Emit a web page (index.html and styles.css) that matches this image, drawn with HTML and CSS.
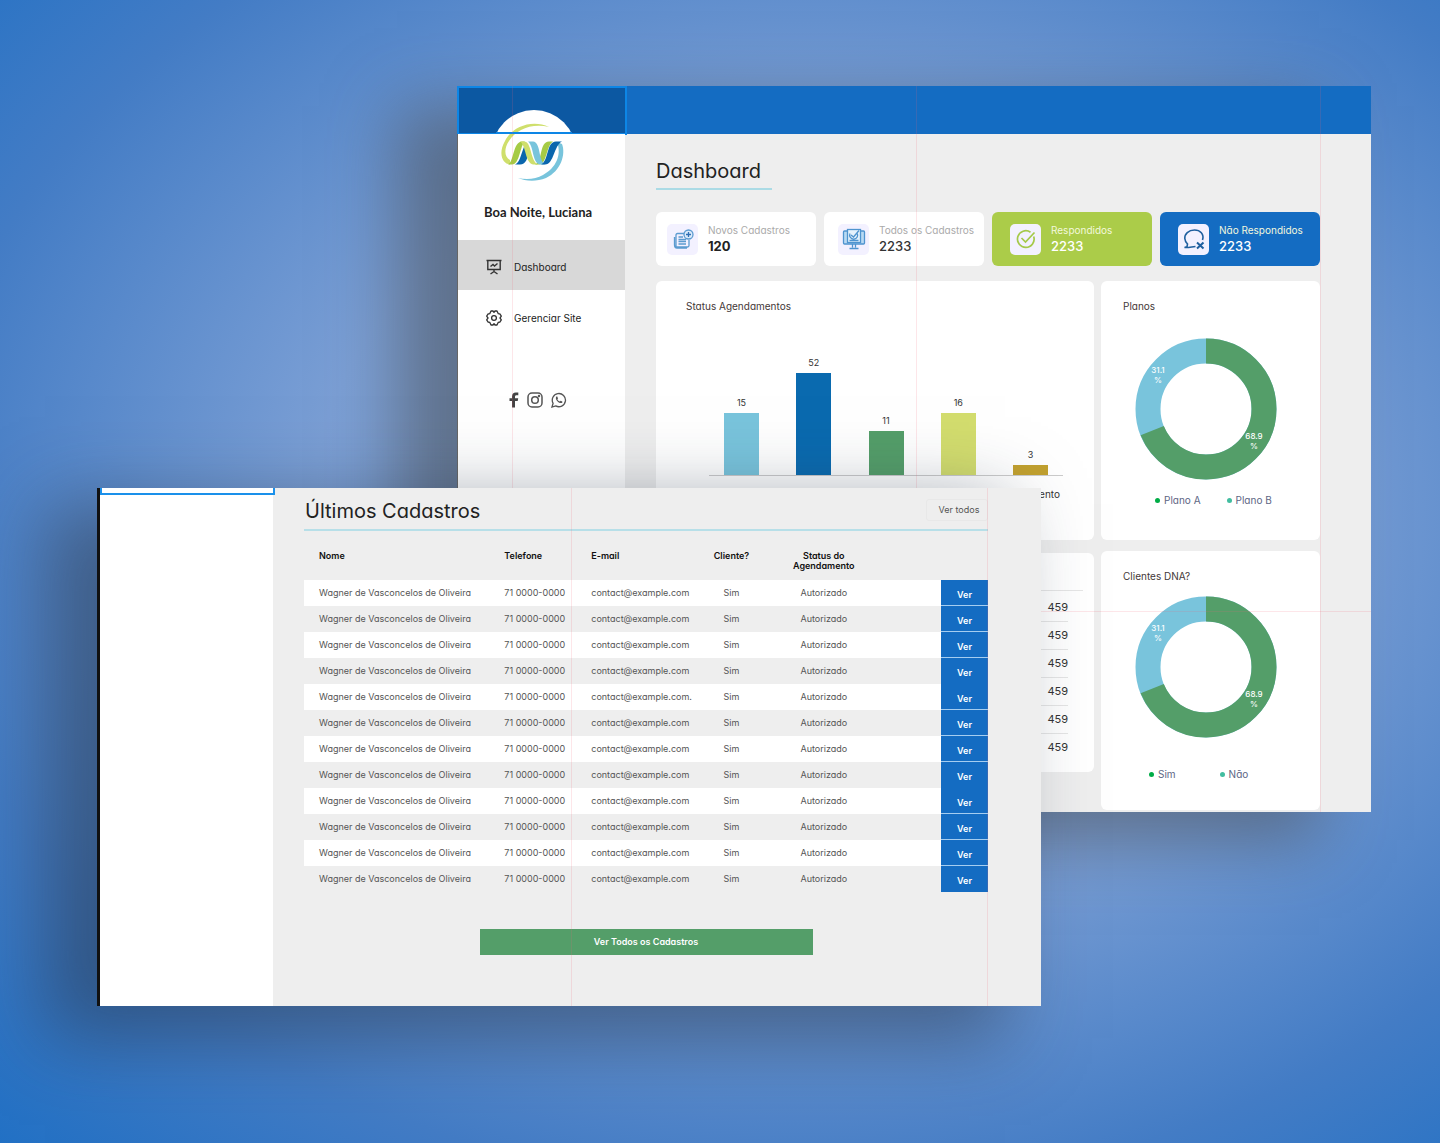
FILE: index.html
```html
<!DOCTYPE html>
<html lang="pt-BR">
<head>
<meta charset="utf-8">
<meta name="viewport" content="width=device-width, initial-scale=1">
<title>Dashboard</title>
<link rel="stylesheet" href="styles.css">
</head>
<body>
<div class="stage">
  <section class="window window-back">
    <header class="topbar"><div class="topbar-side"></div></header>
    <div class="window-body">
      <aside class="sidebar">
        <div class="brand">
          <svg viewBox="0 0 86 86" width="86" height="86" role="img" aria-label="Logo">
            <circle cx="43" cy="43" r="42" fill="#fff"/>
            <path d="M58 18 C42 10 21 17 14 32 C7 44 11 55 19 55.500 L19 51 C13 48 13 39 18 32 C25 21 40 14 58 18Z" fill="#cfdf6c"/>
            <path d="M66 33 L71 35 C75 45 70 62 55 69 C45 73 34 72 27 69 C36 71 45 70 52 66 C65 59 71 46 66 33Z" fill="#78c4dc"/>
            <path d="M24 55.500 C30 53 30 42 35 34 L39 41 C36 50 35 55.500 29 55.500Z" fill="#0a66ad"/>
            <path d="M17 55.500 C23 53 22 32.500 31 32.500 H34 C29 36 29 55.500 21 55.500Z" fill="#a6cb45"/>
            <path d="M29 32.500 H33 C41 32.500 39 52 47 55.500 H42 C34 54 35 36 29 32.500Z" fill="#cfdf6c"/>
            <path d="M44 55.500 C52 53 48 32.500 58 32.500 H62 C55 37 56 55.500 48 55.500Z" fill="#a6cb45"/>
            <path d="M37 32.500 H42 C50 33 47 51 54 55.500 H49 C41 54 43 37 37 32.500Z" fill="#78c4dc"/>
            <path d="M50 55.500 C58 52 55 33 65 32.500 H71 C63 36 63 55.500 54 55.500Z" fill="#0a66ad"/>
            <rect x="5" y="23" width="76" height="2" fill="#0d86e6"/>
          </svg>
        </div>
        <p class="greeting">Boa Noite, Luciana</p>
        <nav class="menu">
          <a class="menu-item is-active" href="#dashboard">
            <svg viewBox="0 0 16 16" width="16" height="16" fill="none" stroke="#333" stroke-width="1.4"><path d="M0.5 1.5H15.5M1.8 1.5V10.5H14.2V1.5M8 10.5V13M4.5 15L8 12.5L11.500 15M4.500 7.500L7 5.500L8.500 7L11.500 4.500"/></svg>
            <span>Dashboard</span>
          </a>
          <a class="menu-item" href="#site">
            <svg viewBox="0 0 16 16" width="16" height="16" fill="none" stroke="#333" stroke-width="1.3" stroke-linejoin="round"><path d="M5 1H7L8 2.300L9 1H11L12.300 3.700L14 4L15.300 6.200L14 8L15.300 9.800L14 12L12.300 12.300L11 15H9L8 13.700L7 15H5L3.700 12.300L2 12L.7 9.800L2 8L.7 6.200L2 4L3.700 3.700Z"/><circle cx="8" cy="8" r="2.400"/></svg>
            <span>Gerenciar Site</span>
          </a>
        </nav>
        <div class="social">
          <a href="#facebook" aria-label="Facebook"><svg viewBox="0 0 10 16" width="10" height="16"><path d="M3 15.500V9H.5V6.200H3V4.500C3 1.800 4.500.5 6.800.5H9.300V3.200H7.500C6.500 3.200 6 3.700 6 4.700V6.200H9.200L8.700 9H6V15.500Z" fill="#444"/></svg></a>
          <a href="#instagram" aria-label="Instagram"><svg viewBox="0 0 16 16" width="16" height="16" fill="none" stroke="#555" stroke-width="1.500"><rect x="1" y="1" width="14" height="14" rx="4"/><circle cx="8" cy="8" r="3.300"/><circle cx="12" cy="4" r=".5"/></svg></a>
          <a href="#whatsapp" aria-label="WhatsApp"><svg viewBox="0 0 16 16" width="16" height="16" fill="none" stroke="#555" stroke-width="1.300"><path d="M1 15L2.100 11.300A6.600 6.600 0 1 1 4.700 13.900Z"/><path d="M5.300 4.500C4.300 6 5 8 6.600 9.500C8.300 11 10.200 11.700 11.400 10.500L11.300 9.500L9.600 8.800L8.800 9.600C7.700 9.200 6.900 8.400 6.400 7.400L7 6.600L6.300 4.600Z" fill="#555" stroke="none"/></svg></a>
        </div>
      </aside>
      <main class="content">
        <h1 class="title">Dashboard</h1>
        <div class="stats">
          <div class="stat">
            <span class="stat-icon">
              <svg viewBox="0 0 22 22" width="22" height="22" fill="none" stroke="#5b9bd0" stroke-width="1.300"><path d="M12 5.500H5.500Q4 5.500 4 7V19H15.500Q17 19 17 17.500V12M2.500 9V17Q2.500 20 5 20H15"/><path d="M6.500 9H11M6.500 11.500H14M6.500 13.500H14M6.500 16H14"/><circle cx="16.500" cy="6.500" r="4.500" fill="#dcebfa"/><path d="M16.500 4V9M14 6.500H19" stroke="#2f6fb5"/></svg>
            </span>
            <div><p class="stat-label">Novos Cadastros</p><p class="stat-value is-strong">120</p></div>
          </div>
          <div class="stat stat-b">
            <span class="stat-icon">
              <svg viewBox="0 0 24 24" width="24" height="24" fill="none" stroke="#4f94cf" stroke-width="1.300"><path d="M5 4H2.500Q1.500 4 1.500 5V16Q1.500 17 2.500 17H21.500Q22.500 17 22.500 16V5Q22.500 4 21.500 4H19" fill="#b9daf3"/><rect x="5.500" y="2.500" width="13" height="13" fill="#e6f2fc"/><path d="M9 8L11.500 10L17 3.500M8 6.500A4 4 0 1 0 15 6M7.500 13.500H16.500M10.500 17V20.500M13.500 17V20.500M7.500 21.500H16.500"/></svg>
            </span>
            <div><p class="stat-label">Todos os Cadastros</p><p class="stat-value">2233</p></div>
          </div>
          <div class="stat stat-c">
            <span class="stat-icon">
              <svg viewBox="0 0 22 22" width="22" height="22" fill="none" stroke="#a5c94a" stroke-width="1.700"><path d="M18.700 8.500A8.300 8.300 0 1 1 15.500 4.200"/><path d="M6.500 10L10.500 14L19.500 4.500"/></svg>
            </span>
            <div><p class="stat-label">Respondidos</p><p class="stat-value">2233</p></div>
          </div>
          <div class="stat stat-c stat-d">
            <span class="stat-icon">
              <svg viewBox="0 0 22 22" width="22" height="22" fill="none" stroke="#1f5f9f" stroke-width="1.600"><path d="M19.500 12C21.500 6 17 2 11.500 2C5.500 2 1.500 6 1.800 10.500C2 13 3 14.500 4.500 16L4 18.800L1.500 19.500H5.500Q8.500 19 12.500 18.500"/><path d="M14 14.500L20.500 20.500M20.500 14.500L14 20.500" stroke-width="2"/></svg>
            </span>
            <div><p class="stat-label">Não Respondidos</p><p class="stat-value">2233</p></div>
          </div>
        </div>
        <div class="panels">
          <div class="panel-col">
            <section class="panel panel-chart">
              <h2 class="panel-title">Status Agendamentos</h2>
              <div class="bars">
                <div class="bar-slot"><span>15</span><div class="bar bar-sky" style="height:62px"></div></div>
                <div class="bar-slot"><span>52</span><div class="bar bar-blue" style="height:102px"></div></div>
                <div class="bar-slot"><span>11</span><div class="bar bar-green" style="height:44px"></div></div>
                <div class="bar-slot"><span>16</span><div class="bar bar-lime" style="height:62px"></div></div>
                <div class="bar-slot"><span>3</span><div class="bar bar-gold" style="height:10px"></div></div>
              </div>
              <p class="axis-label">Agendamento</p>
            </section>
            <section class="panel panel-list">
              <ul class="totals">
                <li>459</li><li>459</li><li>459</li><li>459</li><li>459</li><li>459</li>
              </ul>
            </section>
          </div>
          <div class="panel-col panel-col-right">
            <section class="panel panel-donut">
              <h2 class="panel-title">Planos</h2>
              <svg class="donut" viewBox="0 0 142 142" width="142" height="142">
                <circle cx="71" cy="71" r="58" fill="none" stroke="#79c4dc" stroke-width="25"/>
                <circle cx="71" cy="71" r="58" fill="none" stroke="#549e69" stroke-width="25" pathLength="1000" stroke-dasharray="689 311" transform="rotate(-90 71 71)"/>
                <text x="23" y="35">31.1</text><text x="23" y="45">%</text>
                <text x="119" y="101">68.9</text><text x="119" y="111">%</text>
              </svg>
              <ul class="legend"><li class="dot-a">Plano A</li><li class="dot-b">Plano B</li></ul>
            </section>
            <section class="panel panel-donut is-compact">
              <h2 class="panel-title">Clientes DNA?</h2>
              <svg class="donut" viewBox="0 0 142 142" width="142" height="142">
                <circle cx="71" cy="71" r="58" fill="none" stroke="#79c4dc" stroke-width="25"/>
                <circle cx="71" cy="71" r="58" fill="none" stroke="#549e69" stroke-width="25" pathLength="1000" stroke-dasharray="689 311" transform="rotate(-90 71 71)"/>
                <text x="23" y="35">31.1</text><text x="23" y="45">%</text>
                <text x="119" y="101">68.9</text><text x="119" y="111">%</text>
              </svg>
              <ul class="legend legend-wide"><li class="dot-a">Sim</li><li class="dot-b">Não</li></ul>
            </section>
          </div>
        </div>
      </main>
    </div>
    <i class="guide guide-1"></i><i class="guide guide-2"></i><i class="guide guide-3"></i><i class="guide guide-row"></i>
  </section>

  <section class="window window-front">
    <aside class="front-side"><div class="selection"></div></aside>
    <div class="front-main">
      <div class="front-head">
        <h2 class="title-plain">Últimos Cadastros</h2>
        <button class="btn-ghost" type="button">Ver todos</button>
      </div>
      <table class="records">
        <colgroup><col class="c-name"><col class="c-phone"><col class="c-mail"><col class="c-client"><col class="c-status"><col><col class="c-action"></colgroup>
        <thead>
          <tr><th>Nome</th><th>Telefone</th><th>E-mail</th><th class="mid">Cliente?</th><th class="mid">Status do<br>Agendamento</th><th></th><th></th></tr>
        </thead>
        <tbody>
          <tr><td>Wagner de Vasconcelos de Oliveira</td><td>71 0000-0000</td><td>contact@example.com</td><td class="mid">Sim</td><td class="mid">Autorizado</td><td></td><td class="act"><button type="button">Ver</button></td></tr>
          <tr><td>Wagner de Vasconcelos de Oliveira</td><td>71 0000-0000</td><td>contact@example.com</td><td class="mid">Sim</td><td class="mid">Autorizado</td><td></td><td class="act"><button type="button">Ver</button></td></tr>
          <tr><td>Wagner de Vasconcelos de Oliveira</td><td>71 0000-0000</td><td>contact@example.com</td><td class="mid">Sim</td><td class="mid">Autorizado</td><td></td><td class="act"><button type="button">Ver</button></td></tr>
          <tr><td>Wagner de Vasconcelos de Oliveira</td><td>71 0000-0000</td><td>contact@example.com</td><td class="mid">Sim</td><td class="mid">Autorizado</td><td></td><td class="act"><button type="button" class="joined">Ver</button></td></tr>
          <tr><td>Wagner de Vasconcelos de Oliveira</td><td>71 0000-0000</td><td>contact@example.com.</td><td class="mid">Sim</td><td class="mid">Autorizado</td><td></td><td class="act"><button type="button">Ver</button></td></tr>
          <tr><td>Wagner de Vasconcelos de Oliveira</td><td>71 0000-0000</td><td>contact@example.com</td><td class="mid">Sim</td><td class="mid">Autorizado</td><td></td><td class="act"><button type="button">Ver</button></td></tr>
          <tr><td>Wagner de Vasconcelos de Oliveira</td><td>71 0000-0000</td><td>contact@example.com</td><td class="mid">Sim</td><td class="mid">Autorizado</td><td></td><td class="act"><button type="button">Ver</button></td></tr>
          <tr><td>Wagner de Vasconcelos de Oliveira</td><td>71 0000-0000</td><td>contact@example.com</td><td class="mid">Sim</td><td class="mid">Autorizado</td><td></td><td class="act"><button type="button" class="joined">Ver</button></td></tr>
          <tr><td>Wagner de Vasconcelos de Oliveira</td><td>71 0000-0000</td><td>contact@example.com</td><td class="mid">Sim</td><td class="mid">Autorizado</td><td></td><td class="act"><button type="button">Ver</button></td></tr>
          <tr><td>Wagner de Vasconcelos de Oliveira</td><td>71 0000-0000</td><td>contact@example.com</td><td class="mid">Sim</td><td class="mid">Autorizado</td><td></td><td class="act"><button type="button">Ver</button></td></tr>
          <tr><td>Wagner de Vasconcelos de Oliveira</td><td>71 0000-0000</td><td>contact@example.com</td><td class="mid">Sim</td><td class="mid">Autorizado</td><td></td><td class="act"><button type="button">Ver</button></td></tr>
          <tr><td>Wagner de Vasconcelos de Oliveira</td><td>71 0000-0000</td><td>contact@example.com</td><td class="mid">Sim</td><td class="mid">Autorizado</td><td></td><td class="act"><button type="button" class="joined">Ver</button></td></tr>
        </tbody>
      </table>
      <button class="btn-all" type="button">Ver Todos os Cadastros</button>
    </div>
    <i class="guide guide-4"></i><i class="guide guide-5"></i>
  </section>
</div>
</body>
</html>
```

FILE: styles.css
```css
* { box-sizing: border-box; }
body, p, h1, h2, ul { margin: 0; padding: 0; }
ul { list-style: none; }
a { color: inherit; text-decoration: none; }
svg { display: block; }
button { font: inherit; border: 0; padding: 0; cursor: pointer; }
body {
  font-family: Inter, "Open Sans", sans-serif;
  font-feature-settings: "cv11";
  font-size: 10px;
  line-height: 12px;
  color: #333;
}

/* Backdrop: two overlapping windows share one grid */
.stage {
  display: grid;
  grid-template-columns: minmax(0, 97fr) minmax(0, 360fr) minmax(0, 584fr) minmax(0, 330fr) minmax(0, 69fr);
  grid-template-rows: 86px 402px 324px auto;
  min-height: 100vh;
  padding-bottom: 100px;
  align-items: start;
  background: radial-gradient(ellipse 1100px 850px at 56% 45%, #96b6e4 0%, #7b9fd5 45%, #437cc5 80%, #126bc4 115%);
}
.window { position: relative; }
.window-back {
  grid-column: 3 / 5;
  grid-row: 2 / 4;
  background: #eee;
  box-shadow: -56px 24px 64px 4px rgba(75, 82, 92, .6);
}
.window-front {
  grid-column: 2 / 4;
  grid-row: 3 / 5;
  display: flex;
  min-height: 518px;
  background: #eee;
  border-left: 3px solid #111;
  box-shadow: -44px 24px 72px 8px rgba(35, 50, 70, .5);
}

/* Back window */
.topbar { height: 48px; background: #146cc2; }
.topbar-side { width: 170px; height: 49px; background: #0c58a2; border: 2px solid #0d86e6; }
.window-body { display: flex; }
.sidebar { width: 168px; background: #fff; border-left: 1px solid #666; }
.brand { display: flex; justify-content: center; margin: -25px 16px 0 0; position: relative; }
.greeting {
  margin: 9px 0 0 26px;
  font: 700 13px/16px Lato, sans-serif;
  color: #222;
}
.menu { padding-top: 20px; }
.menu-item { display: flex; align-items: center; gap: 12px; height: 52px; padding: 4px 0 0 28px; color: #222; }
.menu-item.is-active { height: 50px; background: #d8d8d8; }
.social { display: flex; gap: 8px; padding: 50px 0 0 51px; }
.content { flex: 1; min-width: 0; padding: 23px 51px 2px 31px; }
.title, .title-plain { font-size: 20px; line-height: 28px; font-weight: 400; color: #222; }
.title { width: 116px; height: 33px; border-bottom: 2px solid #abdbe5; }
.stats { display: grid; grid-template-columns: repeat(4, 1fr); gap: 8px; margin-top: 22px; }
.stat { display: flex; align-items: center; gap: 10px; height: 54px; padding-left: 11px; border-radius: 6px; background: #fff; }
.stat-b { padding-left: 14px; }
.stat-c { padding-left: 18px; background: #abcc49; color: #fff; }
.stat-d { background: #146cc2; }
.stat-icon { display: grid; place-items: center; width: 31px; height: 31px; border-radius: 5px; background: #f3f1ff; }
.stat-label { font-size: 10px; line-height: 14px; color: #aaa; white-space: nowrap; }
.stat-value { font-size: 13px; line-height: 19px; font-weight: 500; }
.stat-value.is-strong { font-weight: 700; color: #222; }
.stat-c .stat-label { color: #f3f8dd; }

.panels { display: grid; grid-template-columns: 2fr 1fr; gap: 7px; margin-top: 15px; }
.panel-col { display: flex; flex-direction: column; gap: 13px; min-width: 0; }
.panel-col-right { gap: 11px; }
.panel { border-radius: 6px; background: #fff; }
.panel-title { font-size: 10px; line-height: 12px; font-weight: 400; color: #443838; }
.panel-chart { height: 259px; padding: 19px 31px 0 30px; }
.bars {
  display: flex;
  justify-content: space-between;
  align-items: flex-end;
  height: 164px;
  margin-left: 23px;
  padding: 0 15px;
  border-bottom: 1px solid #ccc;
}
.bar-slot { display: flex; flex-direction: column; align-items: center; gap: 4px; width: 35px; font-size: 9px; }
.bar { width: 100%; }
.bar-sky { background: #79c4dc; }
.bar-blue { background: #0a6aaf; }
.bar-green { background: #549e69; }
.bar-lime { background: #d3dd6e; }
.bar-gold { background: #c2a12f; }
.axis-label { margin: 12px 3px 0 0; text-align: right; }
.panel-list { height: 219px; padding: 37px 11px 0 30px; }
.totals { padding: 3px 15px 0 0; border-top: 1px solid #e6e6e6; }
.totals li { height: 28px; line-height: 27px; font-size: 11px; text-align: right; border-bottom: 1px solid #e6e6e6; }
.totals li:last-child { border-bottom: 0; }

.panel-donut { height: 259px; padding: 19px 22px 0; }
.donut { margin: 26px auto 0 12px; }
.donut text { fill: #fff; font-size: 8px; font-weight: 500; text-anchor: middle; }
.is-compact .donut { margin-top: 14px; }
.legend { display: flex; gap: 26px; margin: 14px 0 0 32px; color: #5d6684; }
.legend-wide { gap: 44px; margin: 30px 0 0 26px; }
.legend li { display: flex; align-items: center; gap: 4px; }
.legend li::before { content: ""; width: 5px; height: 5px; border-radius: 50%; background: #00ac46; }
.legend .dot-b::before { background: #42bda0; }

/* Front window */
.front-side { width: 173px; background: #fff; }
.selection { height: 7px; width: 175px; border: solid #1a90ea; border-width: 0 2px 2px; }
.front-main { flex: 1; min-width: 0; display: flex; flex-direction: column; padding: 0 53px 51px 31px; }
.front-head { display: flex; justify-content: space-between; height: 43px; padding: 9px 0 0 1px; border-bottom: 2px solid #b7dfe8; }
.btn-ghost { width: 62px; height: 22px; padding-left: 4px; background: none; border: 1px solid #e8e8e8; border-radius: 3px; font-size: 9px; color: #555; margin-top: 2px; }
.records { width: 100%; table-layout: fixed; border-collapse: collapse; font-size: 9px; line-height: 10px; }
.c-name { width: 29%; }
.c-phone { width: 13%; }
.c-mail { width: 15%; }
.c-client { width: 11%; }
.c-status { width: 16%; }
.c-action { width: 47px; }
.records th { height: 49px; padding: 20px 0 0; text-align: left; vertical-align: top; font-weight: 600; color: #111; }
.records td { height: 26px; padding: 0; white-space: nowrap; color: #555; }
.records th:first-child, .records td:first-child { padding-left: 15px; }
.records th:nth-child(2), .records td:nth-child(2) { padding-left: 2px; }
.records .mid { text-align: center; }
.records tbody tr:nth-child(odd) { background: #fff; }
.records .act button { display: block; width: 100%; height: 26px; padding-top: 4px; background: #146cc2; border-bottom: 1px solid #a5cdf0; color: #fff; font-weight: 600; }
.records .act .joined { border-bottom-color: #146cc2; }
.btn-all { align-self: center; width: 333px; max-width: 100%; height: 26px; margin-top: 37px; background: #549e69; color: #fff; font-size: 9px; font-weight: 600; }

/* Layout guides drawn over the windows */
.guide { position: absolute; top: 0; bottom: 0; width: 1px; background: rgba(240, 100, 120, .16); pointer-events: none; }
.guide-1 { left: 6%; }
.guide-2 { left: calc(50% + 2px); }
.guide-3 { right: 50px; }
.guide-row { top: 525px; bottom: auto; left: 0; right: 0; width: auto; height: 1px; }
.guide-4 { left: 50%; }
.guide-5 { right: 53px; }
```
